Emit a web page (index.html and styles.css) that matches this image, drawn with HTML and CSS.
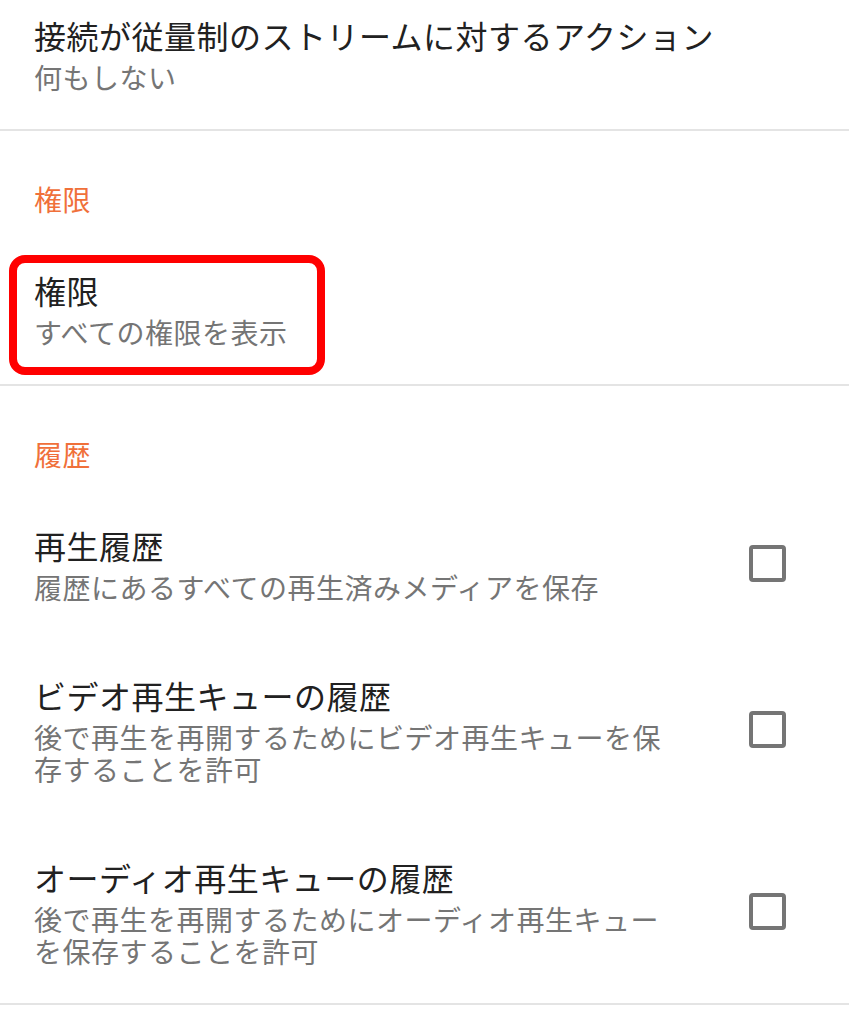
FILE: index.html
```html
<!DOCTYPE html>
<html lang="ja">
<head>
<meta charset="utf-8">
<title>設定</title>
<link rel="stylesheet" href="styles.css">
</head>
<body>
<div class="page">
  <div class="item item-first">
    <div class="item-text">
      <div class="title">接続が従量制のストリームに対するアクション</div>
      <div class="summary">何もしない</div>
    </div>
  </div>
  <div class="divider"></div>

  <div class="section-header">権限</div>
  <div class="item item-highlighted">
    <div class="item-text">
      <div class="title">権限</div>
      <div class="summary">すべての権限を表示</div>
    </div>
    <div class="highlight-box"></div>
  </div>
  <div class="divider"></div>

  <div class="section-header">履歴</div>
  <div class="item">
    <div class="item-text">
      <div class="title">再生履歴</div>
      <div class="summary">履歴にあるすべての再生済みメディアを保存</div>
    </div>
    <div class="checkbox"></div>
  </div>
  <div class="item">
    <div class="item-text">
      <div class="title">ビデオ再生キューの履歴</div>
      <div class="summary">後で再生を再開するためにビデオ再生キューを保存することを許可</div>
    </div>
    <div class="checkbox"></div>
  </div>
  <div class="item">
    <div class="item-text">
      <div class="title">オーディオ再生キューの履歴</div>
      <div class="summary">後で再生を再開するためにオーディオ再生キューを保存することを許可</div>
    </div>
    <div class="checkbox"></div>
  </div>
  <div class="divider"></div>
</div>
</body>
</html>
```

FILE: styles.css
```css
html, body {
  margin: 0;
  padding: 0;
  background: #ffffff;
}

body {
  font-family: "Noto Sans CJK JP", "Noto Sans", sans-serif;
  color: #212121;
  overflow: hidden;
}

.page {
  width: 849px;
}

.item {
  position: relative;
  display: flex;
  align-items: center;
  gap: 85px;
  padding: 34px 63px 36px 34px;
}

.item-first {
  padding-top: 13px;
}

.item-text {
  flex: 1;
  min-width: 0;
}

.title {
  font-size: 32px;
  line-height: 44px;
  letter-spacing: 0.5px;
  color: #212121;
}

.summary {
  margin-top: 4px;
  font-size: 28px;
  line-height: 32px;
  letter-spacing: 0.5px;
  color: #757575;
}

.divider {
  height: 2px;
  background: #e4e4e4;
}

.section-header {
  padding: 52px 34px 19px;
  font-size: 28px;
  line-height: 32px;
  letter-spacing: 0.5px;
  color: #f0703a;
}

.checkbox {
  flex: none;
  width: 37px;
  height: 37px;
  box-sizing: border-box;
  border: 4px solid #757575;
  border-radius: 4px;
}

.highlight-box {
  position: absolute;
  top: 21px;
  left: 9px;
  width: 316px;
  height: 120px;
  box-sizing: border-box;
  border: 8px solid #ff0000;
  border-radius: 16px;
  pointer-events: none;
}
```
